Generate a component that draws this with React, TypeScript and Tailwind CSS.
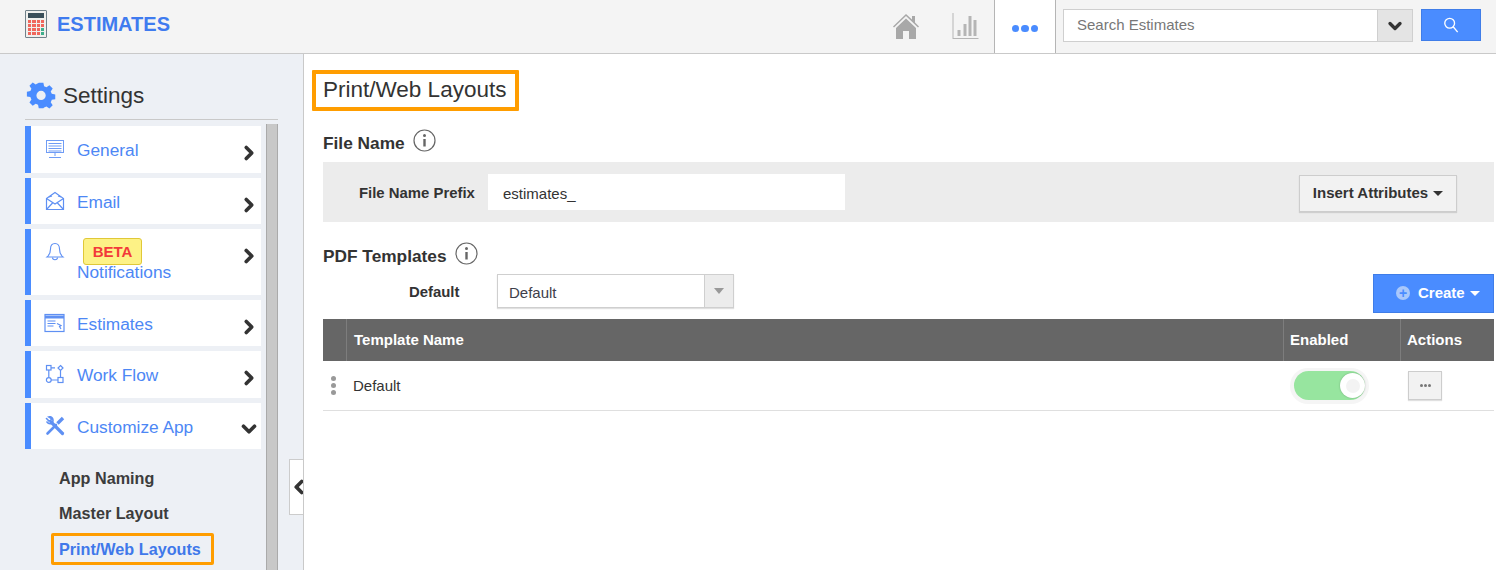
import { ChevronDown, ChevronLeft, ChevronRight } from "lucide-react"
import type { ReactNode } from "react"

function MonitorIcon() {
  return (
    <svg width="20" height="20" viewBox="0 0 20 20" fill="none" stroke="#6f9cf5" strokeWidth="1">
      <rect x="1.5" y="1.5" width="17" height="12" />
      <path d="M3.5 4.5h13M3.5 7h13M3.5 9.5h13M3.5 12h13M10 14v3M4 18.5h12" />
    </svg>
  )
}

function MailIcon() {
  return (
    <svg width="20" height="20" viewBox="0 0 20 20" fill="none" stroke="#5f90f3" strokeWidth="1.2">
      <path d="M1.5 7.5 10 1.5l8.5 6v11h-17z" />
      <path d="M1.5 7.5 10 13l8.5-5.5M1.5 18.5 8 11.5M18.5 18.5 12 11.5M4 6l3-1M13 5l3 1" />
    </svg>
  )
}

function BellIcon() {
  return (
    <svg width="20" height="20" viewBox="0 0 20 20" fill="none" stroke="#5f90f3" strokeWidth="1.1">
      <path d="M10 1.5c-3 0-4.5 2.5-4.5 5.5 0 4-1 6-3.500 8h16c-2.500-2-3.500-4-3.500-8 0-3-1.500-5.500-4.500-5.500z" />
      <path d="M7.500 15.500c0 3 5 3 5 0" />
    </svg>
  )
}

function WindowIcon() {
  return (
    <svg width="21" height="20" viewBox="0 0 21 20" fill="none" stroke="#5f90f3" strokeWidth="1.2">
      <rect x="1" y="1.500" width="19" height="17" />
      <path d="M1 4h19" strokeWidth="3" />
      <path d="M3.500 8h8M3.500 10.500h8M3.500 13h6" />
      <path d="m13 10.500 4 2-1.500 1 1.500 2.500" />
    </svg>
  )
}

function FlowIcon() {
  return (
    <svg width="20" height="20" viewBox="0 0 20 20" fill="none" stroke="#5f90f3" strokeWidth="1.2">
      <rect x="1.500" y="1.500" width="4.500" height="4.500" />
      <path d="M6 3.800h4M3.800 6v7" />
      <path d="M15.500 1.500 18 4l-2.500 2.500L13 4zM15.500 6.500V13M6 16h7" />
      <circle cx="3.800" cy="16" r="2.400" />
      <rect x="13" y="13.500" width="5" height="5" />
    </svg>
  )
}

function ToolsIcon() {
  return (
    <svg width="20" height="20" viewBox="0 0 20 20" fill="none" stroke="#5f90f3" strokeLinecap="round">
      <path d="M6 6 17.500 17.500" strokeWidth="3.200" />
      <path d="M1.500 2.500 4 5l1.800-.6.6-1.800L3.800 1C6.500 0 9 3 7.500 6.500" strokeWidth="1.600" />
      <path d="M2 6c1 1.500 3 2 4.500 1.500" strokeWidth="1.600" />
      <path d="M2.500 17.500 11 9" strokeWidth="2.600" />
      <path d="M12.500 7.500 18 2" strokeWidth="3.400" strokeLinecap="butt" />
    </svg>
  )
}

function InfoIcon() {
  return (
    <svg width="23" height="23" viewBox="0 0 23 23" fill="none">
      <circle cx="11.500" cy="11.500" r="10.500" stroke="#666" strokeWidth="1.200" />
      <circle cx="11.500" cy="6.500" r="1.500" fill="#666" />
      <path d="M11.500 10v7.500" stroke="#666" strokeWidth="2.400" />
    </svg>
  )
}

function SearchIcon() {
  return (
    <svg width="16" height="16" viewBox="0 0 18 18" fill="none" stroke="#fff" strokeWidth="1.500">
      <circle cx="7.500" cy="7" r="5.500" />
      <path d="m11.500 11 5 6" />
    </svg>
  )
}

function CalcIcon() {
  const cells = ["r", "r", "r", "r", "r", "r", "r", "r", "r", "r", "r", "g", "r", "r", "r", "g"]
  return (
    <div className="flex h-[28px] w-[22px] flex-col gap-[2px] rounded-[1px] border border-[#71818a] bg-[#f0f0ee] p-[2px]">
      <div className="h-[5px] bg-[#3a4f5a]" />
      <div className="grid grid-cols-4 gap-[1px]">
        {cells.map((c, i) => (
          <div key={i} className={c === "r" ? "h-[3px] bg-[#f0675c]" : "h-[3px] bg-[#3fae8c]"} />
        ))}
      </div>
    </div>
  )
}

function GearIcon() {
  return (
    <svg width="30" height="30" viewBox="0 0 24 24" fill="#4a8cff">
      <path
        fillRule="evenodd"
        d="M10 1h4l.6 3a8 8 0 0 1 2 .9l2.600-1.700 2.800 2.800-1.700 2.600a8 8 0 0 1 .9 2l3 .6v4l-3 .6a8 8 0 0 1-.9 2l1.700 2.600-2.800 2.800-2.600-1.700a8 8 0 0 1-2 .9L14 23h-4l-.6-3a8 8 0 0 1-2-.9l-2.600 1.700L2 18l1.700-2.600a8 8 0 0 1-.9-2L-.2 12.800v-4l3-.6a8 8 0 0 1 .9-2L2 3.600 4.800.8l2.600 1.700a8 8 0 0 1 2-.9zM12 8a4 4 0 1 0 0 8 4 4 0 0 0 0-8z"
        transform="translate(.9 .4) scale(.93)"
      />
    </svg>
  )
}

function NavItem({ icon, label, open, height = "h-[46px]" }: { icon: ReactNode; label: string; open?: boolean; height?: string }) {
  const beta = label === "Notifications"
  return (
    <div className={`relative flex w-[236px] border-l-[6px] border-[#4a8cff] bg-white ${height}`}>
      <div className="flex w-[46px] shrink-0 justify-center pl-[1px] pt-[13px]">{icon}</div>
      {beta ? (
        <div className="flex flex-col">
          <span className="mt-[9px] ml-[6px] w-[59px] rounded-[3px] border border-[#e0c838] bg-[#fdf286] text-center text-[15px] leading-[25px] font-bold text-[#f23a3a]">
            BETA
          </span>
          <span className="mt-[-5px] text-[17.300px] leading-[24px] text-[#4d87f5]">{label}</span>
        </div>
      ) : (
        <span className="pt-[12px] text-[17.300px] leading-[24px] text-[#4d87f5]">{label}</span>
      )}
      <div className={`absolute right-[1px] ${open ? "top-[15px]" : "top-[16px]"}`}>
        {open ? (
          <ChevronDown size={22} strokeWidth={4} className="text-[#333]" />
        ) : (
          <ChevronRight size={22} strokeWidth={4} className="text-[#333]" />
        )}
      </div>
    </div>
  )
}

function Sidebar() {
  return (
    <aside className="relative flex h-[516px] w-[304px] shrink-0 flex-col overflow-hidden border-r border-[#c9c9c9] bg-[#edf0f5] pl-[25px]">
      <div className="flex h-[66px] w-[253px] shrink-0 items-end gap-[7px] border-b border-[#c9c9c9] pb-[8px] pl-[1px]">
        <GearIcon />
        <span className="text-[22.500px] leading-[30px] text-[#333]">Settings</span>
      </div>
      <div className="flex flex-1 gap-[5px] pt-[4px]">
        <div className="flex flex-col">
          <div className="flex flex-col gap-[5px] pt-[2px]">
            <NavItem icon={<MonitorIcon />} label="General" height="h-[47px]" />
            <NavItem icon={<MailIcon />} label="Email" />
            <NavItem icon={<BellIcon />} label="Notifications" height="h-[66px]" />
            <NavItem icon={<WindowIcon />} label="Estimates" />
            <NavItem icon={<FlowIcon />} label="Work Flow" height="h-[47px]" />
            <NavItem icon={<ToolsIcon />} label="Customize App" open />
          </div>
          <div className="flex flex-col gap-[11px] pl-[34px] pt-[17px] text-[16.200px] leading-[24px] font-bold text-[#3c3c3c]">
            <span>App Naming</span>
            <span>Master Layout</span>
            <span className="ml-[-8px] mt-[-3px] w-fit rounded-[2px] border-[3px] border-[#ff9d00] pl-[5px] pr-[10px] leading-[26px] text-[#3f78ea]">
              Print/Web Layouts
            </span>
          </div>
        </div>
        <div className="w-[12px] self-stretch border-x border-[#aaa] bg-[#c8c8c8]" />
      </div>
      <div className="absolute bottom-[55px] left-[289px] flex h-[56px] w-[14px] items-center overflow-hidden border border-r-0 border-[#ccc] bg-white">
        <ChevronLeft size={22} strokeWidth={4} className="ml-[-2px] shrink-0 text-[#333]" />
      </div>
    </aside>
  )
}

function Header() {
  return (
    <header className="flex h-[54px] items-stretch border-b border-[#c9c9c9] bg-[#f4f4f4]">
      <div className="flex flex-1 items-start gap-[10px] pl-[25px] pt-[10px]">
        <CalcIcon />
        <span className="text-[20px] leading-[28px] font-bold text-[#3f7bef]">ESTIMATES</span>
      </div>
      <div className="flex items-center pb-[2px]">
        <svg width="28" height="28" viewBox="0 0 28 28" fill="#a8a8a8">
          <path d="M14 2 1 14.500l1 1L14 4l12 11.500 1-1-4-4V4h-3v3.500z" />
          <path d="M14 6.500 4 16v11h7v-8h6v8h7V16z" />
        </svg>
      </div>
      <div className="ml-[31px] flex w-[43px] items-center pb-[2px]">
        <svg width="29" height="28" viewBox="0 0 28 28" fill="#b5b5b5">
          <path d="M1 1h1v25h25v1H1z" />
          <path d="M6 18h3v6H6zM12 12h3v12h-3zM17 4h3v20h-3zM22 8h3v16h-3z" />
        </svg>
      </div>
      <div className="flex w-[62px] items-center justify-center gap-[2px] border-x border-[#b5b5b5] bg-white pt-[4px]">
        <span className="size-[7.500px] rounded-full bg-[#4a8cff]" />
        <span className="size-[7.500px] rounded-full bg-[#4a8cff]" />
        <span className="size-[7.500px] rounded-full bg-[#4a8cff]" />
      </div>
      <div className="ml-[7px] mt-[9px] flex h-[33px] w-[350px] border border-[#cfcfcf] bg-white">
        <span className="flex-1 pl-[13px] text-[15px] leading-[30px] text-[#777]">Search Estimates</span>
        <div className="flex w-[35px] items-center justify-center border-l border-[#cfcfcf] bg-[#e4e4e4]">
          <ChevronDown size={20} strokeWidth={4} className="text-[#333]" />
        </div>
      </div>
      <div className="ml-[8px] mr-[15px] mt-[9px] flex h-[32px] w-[60px] items-center justify-center border border-[#3f7de8] bg-[#4a8cff]">
        <SearchIcon />
      </div>
    </header>
  )
}

function Main() {
  return (
    <main className="min-w-0 flex-1 bg-white pl-[19px] pr-[2px] text-[#333]">
      <div className="mt-[16px] ml-[-11px] flex h-[41px] w-[207px] items-center rounded-[1px] border-[4px] border-[#ff9d00] pb-[2px] pl-[7px]">
        <h1 className="whitespace-nowrap text-[22.500px] font-normal leading-[30px] text-[#333]">Print/Web Layouts</h1>
      </div>

      <div className="mt-[21px] flex h-[22px] items-center gap-[8px]">
        <h2 className="text-[17.300px] leading-[22px] font-bold">File Name</h2>
        <div className="mt-[-6px]">
          <InfoIcon />
        </div>
      </div>
      <div className="mt-[8px] flex h-[60px] items-center bg-[#ececec] pl-[36px]">
        <span className="mt-[2px] w-[117px] whitespace-nowrap text-[14.900px] font-bold text-[#333]">File Name Prefix</span>
        <div className="ml-[12px] h-[36px] w-[357px] bg-white pl-[15px] text-[15px] leading-[39px] text-[#333]">estimates_</div>
        <button className="ml-[454px] mt-[2px] flex h-[37px] w-[158px] items-center justify-center gap-[5px] border border-[#cdcdcd] bg-[#f2f2f2] text-[15px] font-bold text-[#333] shadow-[0_1px_1px_rgba(0,0,0,0.12)]">
          Insert Attributes
          <span className="mt-[1px] border-x-[5px] border-t-[5px] border-x-transparent border-t-[#333]" />
        </button>
      </div>

      <div className="mt-[22px] flex h-[24px] items-center gap-[8px]">
        <h2 className="text-[17.300px] leading-[24px] font-bold">PDF Templates</h2>
        <div className="mt-[-5px]">
          <InfoIcon />
        </div>
      </div>
      <div className="mt-[6px] flex h-[38px] items-start">
        <span className="ml-[86px] w-[88px] pt-[8px] text-[14.900px] leading-[20px] font-bold">Default</span>
        <div className="flex h-[34px] w-[237px] border border-[#cfcfcf] shadow-[0_1px_1px_rgba(0,0,0,0.12)]">
          <span className="flex-1 pl-[11px] text-[15px] leading-[35px] text-[#3e3e4a]">Default</span>
          <div className="flex w-[29px] items-center justify-center border-l border-[#cfcfcf] bg-[#ececec]">
            <span className="border-x-[5px] border-t-[6px] border-x-transparent border-t-[#999]" />
          </div>
        </div>
        <button className="ml-auto flex h-[39px] w-[121px] shrink-0 items-center gap-[8px] border border-[#3f7de8] bg-[#4a8cff] pl-[22px] text-[15px] font-bold text-white">
          <span className="mt-[-2px] flex size-[14px] items-center justify-center rounded-full bg-[#a9c8fb] text-[14px] leading-[14px] font-bold text-[#4a8cff]">+</span>
          Create
          <span className="ml-[-3px] border-x-[5px] border-t-[5px] border-x-transparent border-t-white" />
        </button>
      </div>

      <div className="mt-[7px] flex h-[42px] items-center bg-[#666] text-[15px] font-bold text-white">
        <div className="h-full w-[24px] border-r border-[#7d7d7d]" />
        <span className="flex-1 pl-[7px]">Template Name</span>
        <span className="flex h-full w-[117px] items-center border-l border-[#7d7d7d] pl-[6px]">Enabled</span>
        <span className="flex h-full w-[94px] items-center border-l border-[#7d7d7d] pl-[6px]">Actions</span>
      </div>
      <div className="flex h-[50px] items-center border-b border-[#dfdfdf]">
        <div className="flex w-[21px] flex-col items-center gap-[2px] pr-[1px]">
          <span className="size-[5px] rounded-full bg-[#999]" />
          <span className="size-[5px] rounded-full bg-[#999]" />
          <span className="size-[5px] rounded-full bg-[#999]" />
        </div>
        <span className="ml-[9px] flex-1 pt-[1px] text-[15px] text-[#333]">Default</span>
        <div className="mr-[39px] flex h-[36px] w-[79px] items-center rounded-full bg-[#f5f5f5] p-[4px]">
          <div className="flex h-[29px] flex-1 items-center justify-end rounded-full bg-[#97e59f]">
            <span className="flex size-[25px] items-center justify-center rounded-full bg-white shadow-[0_0_2px_rgba(0,0,0,0.25)]">
              <span className="size-[14px] rounded-full bg-[#f3f3f3]" />
            </span>
          </div>
        </div>
        <button className="mr-[52px] flex h-[29px] w-[34px] items-center justify-center gap-[1px] border border-[#cdcdcd] bg-[#f2f2f2] shadow-[0_1px_1px_rgba(0,0,0,0.12)]">
          <span className="size-[3px] rounded-full bg-[#777]" />
          <span className="size-[3px] rounded-full bg-[#777]" />
          <span className="size-[3px] rounded-full bg-[#777]" />
        </button>
      </div>
    </main>
  )
}

export default function App() {
  return (
    <div className="h-[570px] w-[1496px] overflow-hidden bg-white font-['Liberation_Sans',Arial,sans-serif]">
      <Header />
      <div className="flex">
        <Sidebar />
        <Main />
      </div>
    </div>
  )
}
